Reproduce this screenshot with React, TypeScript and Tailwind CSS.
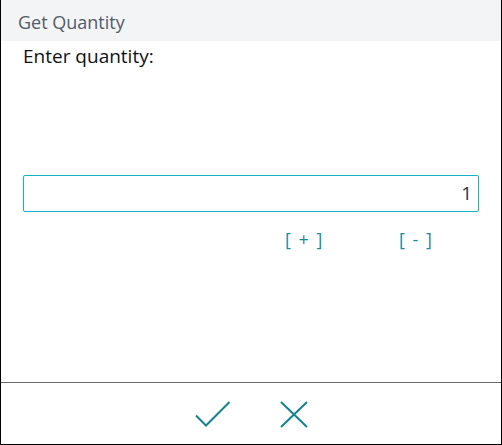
export default function App() {
  return (
    <div
      className="w-[502px] h-[445px] flex flex-col bg-white border-l border-r border-b border-black"
      style={{ fontFamily: '"Open Sans", "Noto Sans", sans-serif' }}
    >
      {/* header */}
      <div className="h-[41px] bg-[#f3f4f6] flex items-center pt-[3px] px-[17px] text-[18px] text-[#555b63]">
        Get Quantity
      </div>

      {/* body */}
      <div className="flex-1 px-[22px]">
        <div className="mt-[2px] text-[19px] leading-[27px] text-[#111]">Enter quantity:</div>

        <div className="mt-[105px] h-[37px] border border-[#16b3c2] rounded-[2px] flex items-center justify-end px-[6px] text-[19px] text-[#333]">
          1
        </div>

        <div className="mt-[14px] flex text-[18px] leading-[26px] text-[#1d8c9a] tracking-[1.5px]">
          <span className="ml-[262px] w-[40px] whitespace-pre">[ + ]</span>
          <span className="ml-[74px] whitespace-pre">[ - ]</span>
        </div>
      </div>

      {/* footer */}
      <div className="h-[62px] border-t border-[#6b6b6b] flex items-center justify-center gap-[49px]">
        <svg width="36" height="27" viewBox="0 0 36 27" fill="none" className="mt-[2px]">
          <path d="M1 14.5 L11 24.5 L34.5 1" stroke="#13838f" strokeWidth="2" />
        </svg>
        <svg width="28" height="27" viewBox="0 0 28 27" fill="none" className="mt-[2px]">
          <path d="M1 1 L27 26 M27 1 L1 26" stroke="#13838f" strokeWidth="2" />
        </svg>
      </div>
    </div>
  );
}
